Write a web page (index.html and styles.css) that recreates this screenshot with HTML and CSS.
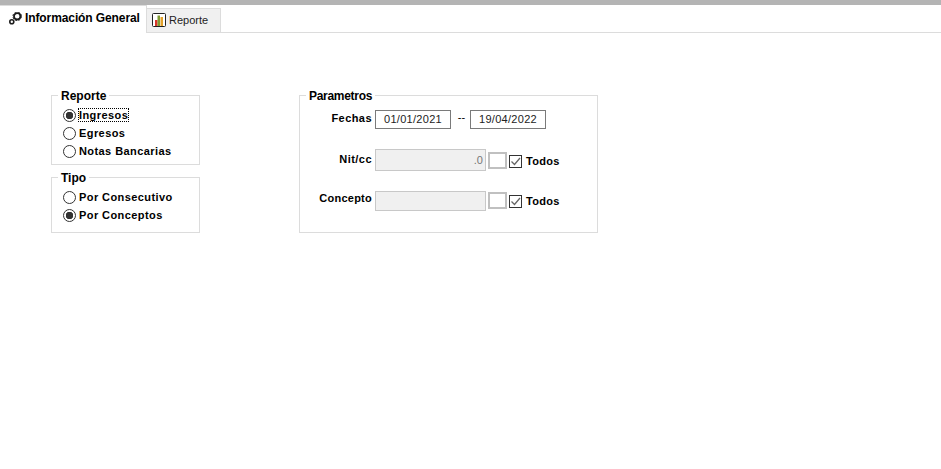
FILE: index.html
```html
<!DOCTYPE html>
<html lang="es">
<head>
  <meta charset="UTF-8">
  <title>Reporte</title>
  <link rel="stylesheet" href="styles.css">
</head>
<body>
  <div class="top-bar"></div>

  <div class="tabs">
    <div class="tab tab-active">
      <svg class="tab-icon" width="16" height="16" viewBox="0 0 16 16">
        <circle cx="9.2" cy="4.3" r="3.2" fill="none" stroke="#1c1c1c" stroke-width="1.8"/>
        <circle cx="9.2" cy="4.3" r="4.3" fill="none" stroke="#1c1c1c" stroke-width="0.9" stroke-dasharray="2 1.4"/>
        <circle cx="3.8" cy="9.8" r="2" fill="none" stroke="#1c1c1c" stroke-width="1.6"/>
      </svg>
      <span>Información General</span>
    </div>
    <div class="tab">
      <svg class="tab-icon" width="15" height="15" viewBox="0 0 15 15">
        <rect x="0.5" y="0.5" width="13" height="13" rx="1" fill="#fff" stroke="#222"/>
        <rect x="3" y="7" width="2.5" height="6" fill="#d8342a"/>
        <rect x="5.5" y="2.5" width="2.5" height="10.5" fill="#7f9a32"/>
        <rect x="8.5" y="4" width="2.5" height="9" fill="#e2a12a"/>
      </svg>
      <span>Reporte</span>
    </div>
  </div>

  <div class="content">
    <div class="left-col">
      <fieldset class="group group-reporte">
        <legend>Reporte</legend>
        <label class="radio-row"><span class="radio checked"></span><span class="focused">Ingresos</span></label>
        <label class="radio-row"><span class="radio"></span><span>Egresos</span></label>
        <label class="radio-row"><span class="radio"></span><span>Notas Bancarias</span></label>
      </fieldset>
      <fieldset class="group group-tipo">
        <legend>Tipo</legend>
        <label class="radio-row"><span class="radio"></span><span>Por Consecutivo</span></label>
        <label class="radio-row"><span class="radio checked"></span><span>Por Conceptos</span></label>
      </fieldset>
    </div>

    <fieldset class="group group-param">
      <legend>Parametros</legend>
      <div class="param-row row-fechas">
        <span class="param-label">Fechas</span>
        <span class="date-box">01/01/2021</span>
        <span class="dash">--</span>
        <span class="date-box">19/04/2022</span>
      </div>
      <div class="param-row row-nit">
        <span class="param-label">Nit/cc</span>
        <span class="text-box">.0</span>
        <span class="small-btn"></span>
        <span class="check">
          <svg width="11" height="11" viewBox="0 0 11 11"><path d="M1.5 5.5 L4.5 8.5 L10 2" fill="none" stroke="#666" stroke-width="1.3"/></svg>
        </span>
        <span class="check-label">Todos</span>
      </div>
      <div class="param-row row-concepto">
        <span class="param-label">Concepto</span>
        <span class="text-box"></span>
        <span class="small-btn"></span>
        <span class="check">
          <svg width="11" height="11" viewBox="0 0 11 11"><path d="M1.5 5.5 L4.5 8.5 L10 2" fill="none" stroke="#666" stroke-width="1.3"/></svg>
        </span>
        <span class="check-label">Todos</span>
      </div>
    </fieldset>
  </div>
</body>
</html>
```

FILE: styles.css
```css
* {
  box-sizing: border-box;
}

body {
  margin: 0;
  background: #fff;
  color: #000;
  font-family: 'Liberation Sans', Arial, sans-serif;
  font-size: 11px;
  height: 469px;
  overflow: hidden;
}

.top-bar {
  height: 5px;
  background: #b4b4b4;
}

/* Tabs */
.tabs {
  display: flex;
  align-items: flex-end;
  height: 28px;
  border-bottom: 1px solid #dcdcdc;
}

.tab {
  display: flex;
  align-items: center;
  gap: 2px;
  width: 74px;
  height: 24px;
  padding-left: 5px;
  background: #f0f0f0;
  border: 1px solid #dcdcdc;
  border-bottom: 0;
  border-left: 0;
  font-size: 11px;
  color: #222;
}

.tab span {
  position: relative;
  top: -1px;
}

.tab-active {
  width: 147px;
  height: 28px;
  margin-bottom: -1px;
  padding-left: 8px;
  background: #fff;
  font-size: 12px;
  font-weight: bold;
  letter-spacing: -0.1px;
  color: #000;
  gap: 1px;
}

.tab-active span {
  top: -2px;
}

.tab-icon {
  flex: none;
}

/* Groups */
.content {
  display: flex;
  align-items: flex-start;
  padding: 56px 0 0 51px;
  gap: 99px;
}

.left-col {
  display: flex;
  flex-direction: column;
  gap: 6px;
  width: 149px;
}

.group {
  margin: 0;
  padding: 0;
  border: 1px solid #dcdcdc;
  font-weight: bold;
}

.group legend {
  position: relative;
  top: 1px;
  margin-left: 6px;
  padding: 0 3px;
  font-size: 12px;
  line-height: 13px;
}

.left-col .group legend {
  margin-left: -5px;
}

.group-reporte {
  height: 76px;
  padding: 4px 0 0 11px;
}

.group-tipo {
  height: 62px;
  padding: 4px 0 0 11px;
}

.group-param {
  width: 299px;
  height: 144px;
}

.group-param legend {
  letter-spacing: -0.3px;
}

/* Radios */
.radio-row {
  display: flex;
  align-items: center;
  gap: 3px;
  height: 18px;
  letter-spacing: 0.42px;
}

.radio {
  flex: none;
  width: 13px;
  height: 13px;
  border: 1px solid #333;
  border-radius: 50%;
  background: #fff;
}

.radio.checked {
  background: radial-gradient(circle, #333 0 3.5px, #fff 4px);
}

.focused {
  outline: 1px dotted #000;
}

/* Parametros */
.param-row {
  display: flex;
  align-items: flex-start;
}

.row-fechas {
  height: 19px;
  margin-top: 8px;
}

.row-fechas .param-label {
  margin-top: 1px;
}

.row-nit {
  height: 22px;
  margin-top: 20px;
}

.row-concepto {
  height: 22px;
  margin-top: 18px;
}

.param-label {
  width: 72px;
  margin: 3px 3px 0 0;
  line-height: 14px;
  text-align: right;
  letter-spacing: 0.45px;
}

.row-concepto .param-label {
  margin-top: 2px;
  letter-spacing: 0.25px;
}

.date-box {
  width: 76px;
  height: 19px;
  border: 1px solid #7a7a7a;
  font-weight: normal;
  text-align: center;
  line-height: 17px;
  letter-spacing: 0.3px;
  color: #222;
}

.dash {
  width: 19px;
  padding-left: 2px;
  font-weight: normal;
  text-align: center;
  line-height: 14px;
}

.text-box {
  width: 111px;
  height: 22px;
  margin-right: 2px;
  border: 1px solid #c8c8c8;
  background: #f0f0f0;
  padding-right: 2px;
  font-weight: normal;
  text-align: right;
  line-height: 20px;
  color: #777;
}

.row-concepto .text-box {
  height: 20px;
  margin-top: 2px;
}

.small-btn {
  width: 19px;
  height: 17px;
  margin: 3px 2px 0 0;
  border: 2px solid #c0c0c0;
  background: #fff;
}

.check {
  display: flex;
  align-items: center;
  justify-content: center;
  width: 13px;
  height: 13px;
  margin: 6px 4px 0 0;
  border: 1px solid #333;
  background: #fff;
}

.check-label {
  margin-top: 5px;
  line-height: 14px;
  letter-spacing: 0.3px;
}
```
